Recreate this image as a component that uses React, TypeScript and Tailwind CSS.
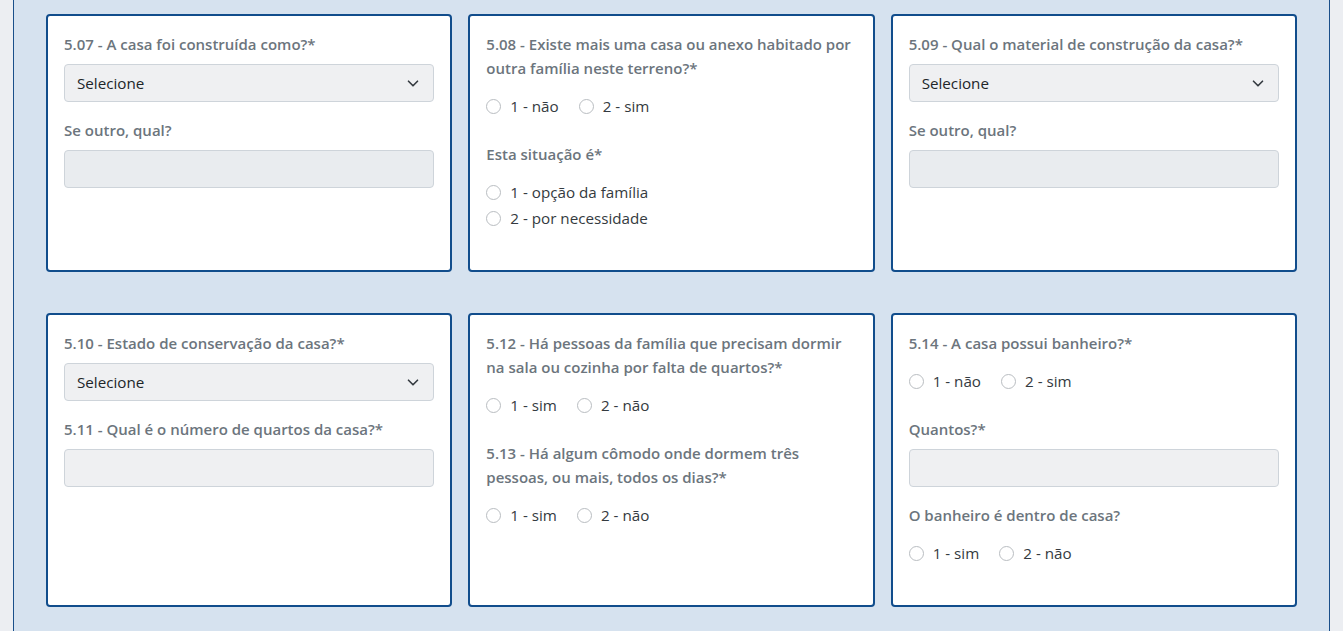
import React from "react";

const font = { fontFamily: '"Open Sans", "Noto Sans", sans-serif' };

function Label({ children }: { children: React.ReactNode }) {
  return (
    <p className="text-[15px] leading-6 font-semibold text-[#6c757d] mb-2">{children}</p>
  );
}

function Radio({ label }: { label: string }) {
  return (
    <label className="inline-flex items-center gap-[9px] mr-[20px] text-[15.2px] leading-6 text-[#343a40]">
      <span className="w-[15px] h-[15px] rounded-full border border-[#b9bdc1] bg-white"></span>
      {label}
    </label>
  );
}

function RadioRow({ options }: { options: string[] }) {
  return (
    <div className="mt-[14px] mb-6 flex">
      {options.map((o) => (
        <Radio key={o} label={o} />
      ))}
    </div>
  );
}

function Select({ bg }: { bg: string }) {
  return (
    <div className={`h-[38px] mb-4 flex items-center justify-between rounded-[4px] border border-[#ced4da] pl-3 pr-[14px] text-[15.2px] text-[#212529] ${bg}`}>
      <span>Selecione</span>
      <svg width="12" height="9" viewBox="0 0 16 12" fill="none">
        <path d="M2 3l6 6 6-6" stroke="#343a40" strokeWidth="2.2" strokeLinecap="round" strokeLinejoin="round" />
      </svg>
    </div>
  );
}

function Input({ bg }: { bg: string }) {
  return <div className={`h-[38px] mb-4 rounded-[4px] border border-[#ced4da] ${bg}`}></div>;
}

function Card({ children }: { children: React.ReactNode }) {
  return <div className="bg-white border-2 border-[#114d8c] rounded-[4px] px-4 pt-4 pb-4">{children}</div>;
}

export default function App() {
  return (
    <div className="min-h-screen bg-[#eceef2] px-[13px]" style={font}>
      <div className="min-h-[631px] bg-[#d6e2ef] border-x border-[#1a4f8a] px-8 pt-[14px] pb-6">
        <div className="grid grid-cols-3 gap-x-4 gap-y-[41px]">
          <Card>
            <Label>5.07 - A casa foi construída como?*</Label>
            <Select bg="bg-[#eff0f2]" />
            <Label>Se outro, qual?</Label>
            <Input bg="bg-[#e9ecef]" />
          </Card>
          <Card>
            <Label>5.08 - Existe mais uma casa ou anexo habitado por outra família neste terreno?*</Label>
            <RadioRow options={["1 - não", "2 - sim"]} />
            <Label>Esta situação é*</Label>
            <div className="mt-[14px] mb-6 flex flex-col gap-[2px]">
              <Radio label="1 - opção da família" />
              <Radio label="2 - por necessidade" />
            </div>
          </Card>
          <Card>
            <Label>5.09 - Qual o material de construção da casa?*</Label>
            <Select bg="bg-[#eff0f2]" />
            <Label>Se outro, qual?</Label>
            <Input bg="bg-[#e9ecef]" />
          </Card>

          <Card>
            <Label>5.10 - Estado de conservação da casa?*</Label>
            <Select bg="bg-[#eff0f2]" />
            <Label>5.11 - Qual é o número de quartos da casa?*</Label>
            <Input bg="bg-[#eff0f2]" />
          </Card>
          <Card>
            <Label>5.12 - Há pessoas da família que precisam dormir na sala ou cozinha por falta de quartos?*</Label>
            <RadioRow options={["1 - sim", "2 - não"]} />
            <Label>5.13 - Há algum cômodo onde dormem três pessoas, ou mais, todos os dias?*</Label>
            <RadioRow options={["1 - sim", "2 - não"]} />
          </Card>
          <Card>
            <Label>5.14 - A casa possui banheiro?*</Label>
            <RadioRow options={["1 - não", "2 - sim"]} />
            <Label>Quantos?*</Label>
            <Input bg="bg-[#eff0f2]" />
            <Label>O banheiro é dentro de casa?</Label>
            <RadioRow options={["1 - sim", "2 - não"]} />
          </Card>
        </div>
      </div>
    </div>
  );
}
